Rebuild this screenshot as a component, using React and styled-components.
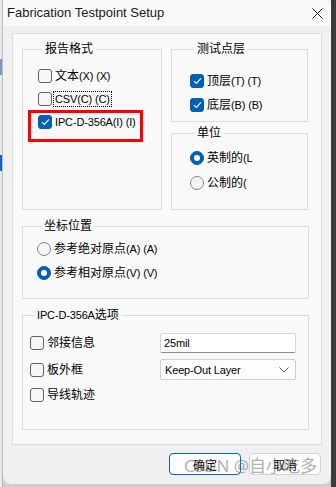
import React from "react";
import styled, { createGlobalStyle } from "styled-components";

const GlobalStyle = createGlobalStyle`
  html, body {
    margin: 0;
    padding: 0;
    background: #3b3b3b;
  }
  * {
    box-sizing: border-box;
  }
`;

const FONT = `"Liberation Sans", "Noto Sans CJK SC", sans-serif`;

const Desktop = styled.div`
  display: flex;
  width: 336px;
  height: 487px;
  overflow: hidden;
  background: #3b3b3b;
`;

const LeftStrip = styled.div`
  display: flex;
  flex-direction: column;
  width: 3px;
  height: 100%;
  background: #e9e9e9;
  border-right: 1px solid #bdbdbd;
`;

const StripBlock = styled.div`
  height: ${(p) => p.h}px;
  margin-top: ${(p) => p.top}px;
  background: ${(p) => p.color};
`;

const WindowCol = styled.div`
  display: flex;
  flex-direction: column;
  width: 328px;
  height: 100%;
  background: #cfcfcf;
`;

const Window = styled.div`
  position: relative;
  display: flex;
  flex-direction: column;
  height: 484px;
  background: #f0f0f0;
  border-radius: 0 0 8px 8px;
  font-family: ${FONT};
  font-size: 12px;
  color: #000;
`;

const TitleBar = styled.div`
  display: flex;
  align-items: center;
  justify-content: space-between;
  height: 26px;
  padding: 0 8px 0 4px;
  background: #f9f9f9;
  border-radius: 0 8px 0 0;
`;

const Title = styled.span`
  font-size: 13px;
  color: #1a1a1a;
  margin-top: -1px;
`;

const Body = styled.div`
  display: flex;
  flex-direction: column;
  padding: 7px 9px 0 9px;
`;

const Panel = styled.div`
  display: flex;
  flex-direction: column;
  gap: 9px;
  height: 412px;
  padding: 8px 12px 0 9px;
  background: #f9f9f9;
  border: 1px solid #dedede;
`;

const TopRow = styled.div`
  display: grid;
  grid-template-columns: 140px 137px;
  gap: 9px;
`;

const Column = styled.div`
  display: flex;
  flex-direction: column;
  gap: 4px;
`;

const Group = styled.fieldset`
  display: flex;
  flex-direction: column;
  gap: ${(p) => p.gap || 3}px;
  height: ${(p) => p.h}px;
  margin: 0;
  padding: ${(p) => p.pt || 8}px 0 0 ${(p) => p.pl || 15}px;
  border: 1px solid #dcdcdc;
  min-width: 0;
`;

const Legend = styled.legend`
  margin-left: 4px;
  padding: 0 3px;
  font-size: 12px;
  line-height: 14px;
  color: #000;
`;

/* Latin runs are set a size smaller, as the narrow UI font in the shot */
const Latin = styled.span`
  font-size: 11px;
  letter-spacing: -0.15px;
`;

const Row = styled.div`
  display: flex;
  align-items: center;
  height: 20px;
`;

const OptionRow = styled.div`
  display: grid;
  grid-template-columns: 130px 136px;
  align-items: center;
  height: 20px;
`;

const Item = styled.label`
  position: relative;
  display: flex;
  align-items: center;
  gap: 2px;
  height: 20px;
  white-space: nowrap;
`;

const Box = styled.span`
  display: flex;
  align-items: center;
  justify-content: center;
  width: 14px;
  height: 14px;
  border-radius: 3px;
  border: 1px solid ${(p) => (p.checked ? "#005fb8" : "#616161")};
  background: ${(p) => (p.checked ? "#005fb8" : "#f7f7f7")};
`;

const Radio = styled.span`
  display: flex;
  align-items: center;
  justify-content: center;
  width: 14px;
  height: 14px;
  border-radius: 50%;
  border: 1px solid ${(p) => (p.checked ? "#005fb8" : "#858585")};
  background: ${(p) => (p.checked ? "#005fb8" : "#f5f5f5")};

  &::after {
    content: "";
    display: ${(p) => (p.checked ? "block" : "none")};
    width: 6px;
    height: 6px;
    border-radius: 50%;
    background: #fff;
  }
`;

const Text = styled.span`
  padding: 0 1px;
  outline: ${(p) => (p.focused ? "1px dotted #000" : "none")};
  outline-offset: 0;
  line-height: 14px;
`;

const Highlight = styled.span`
  position: absolute;
  left: -10px;
  top: -2px;
  width: 115px;
  height: 32px;
  border: 3px solid #ff0000;
  pointer-events: none;
`;

const Input = styled.div`
  display: flex;
  align-items: center;
  height: 20px;
  padding-left: 3px;
  background: #fff;
  border: 1px solid #d6d6d6;
  border-bottom-color: #8c8c8c;
  border-radius: 2px;
`;

const Select = styled.div`
  display: flex;
  align-items: center;
  justify-content: space-between;
  height: 21px;
  padding: 0 6px 0 4px;
  background: #fdfdfd;
  border: 1px solid #d0d0d0;
  border-radius: 2px;
`;

const Footer = styled.div`
  display: flex;
  justify-content: flex-end;
  gap: 8px;
  padding: 8px 1px 0 0;
`;

const Button = styled.button`
  width: 72px;
  height: 22px;
  padding: 0;
  font-family: ${FONT};
  font-size: 12px;
  color: #000;
  background: #fdfdfd;
  border: 1px solid ${(p) => (p.primary ? "#0067c0" : "#d2d2d2")};
  border-radius: 4px;
`;

const Watermark = styled.div`
  position: absolute;
  left: 181px;
  top: 452px;
  font-family: "Noto Sans", "Noto Sans CJK SC", sans-serif;
  font-size: 17px;
  color: rgba(110, 110, 110, 0.55);
  pointer-events: none;
  white-space: nowrap;
`;

const Check = () => (
  <svg width="9" height="8" viewBox="0 0 9 8">
    <path d="M1 4.2 L3.4 6.4 L8 1.4" fill="none" stroke="#fff" strokeWidth="1.1" />
  </svg>
);

const CheckItem = ({ checked, children, focused }) => (
  <Item>
    <Box checked={checked}>{checked && <Check />}</Box>
    <Text focused={focused}>{children}</Text>
  </Item>
);

const RadioItem = ({ checked, children }) => (
  <Item>
    <Radio checked={checked} />
    <Text>{children}</Text>
  </Item>
);

const App = () => {
  return (
    <>
      <GlobalStyle />
      <Desktop>
        <LeftStrip>
          <StripBlock top={59} h={16} color="#7a98c2" />
          <StripBlock top={80} h={16} color="#0b63c3" />
        </LeftStrip>
        <WindowCol>
          <Window>
            <TitleBar>
              <Title>Fabrication Testpoint Setup</Title>
              <svg width="11" height="11" viewBox="0 0 11 11">
                <path d="M0.5 0.5 L10.5 10.5 M10.5 0.5 L0.5 10.5" stroke="#1a1a1a" strokeWidth="1" />
              </svg>
            </TitleBar>
            <Body>
              <Panel>
                <TopRow>
                  <Group h={168} pt={10} pl={15} gap={3}>
                    <Legend>报告格式</Legend>
                    <CheckItem>
                      文本<Latin>(X) (X)</Latin>
                    </CheckItem>
                    <CheckItem focused>
                      <Latin>CSV(C) (C)</Latin>
                    </CheckItem>
                    <Item>
                      <Box checked>
                        <Check />
                      </Box>
                      <Text>
                        <Latin>IPC-D-356A(I) (I)</Latin>
                      </Text>
                      <Highlight />
                    </Item>
                  </Group>
                  <Column>
                    <Group h={80} pt={15} pl={18} gap={4}>
                      <Legend>测试点层</Legend>
                      <CheckItem checked>
                        顶层<Latin>(T) (T)</Latin>
                      </CheckItem>
                      <CheckItem checked>
                        底层<Latin>(B) (B)</Latin>
                      </CheckItem>
                    </Group>
                    <Group h={84} pt={8} pl={18} gap={5}>
                      <Legend>单位</Legend>
                      <RadioItem checked>
                        英制的<Latin>(L</Latin>
                      </RadioItem>
                      <RadioItem>
                        公制的<Latin>(</Latin>
                      </RadioItem>
                    </Group>
                  </Column>
                </TopRow>
                <Group h={80} pt={6} pl={14} gap={4}>
                  <Legend>坐标位置</Legend>
                  <RadioItem>
                    参考绝对原点<Latin>(A) (A)</Latin>
                  </RadioItem>
                  <RadioItem checked>
                    参考相对原点<Latin>(V) (V)</Latin>
                  </RadioItem>
                </Group>
                <Group h={122} pt={11} pl={7} gap={6}>
                  <Legend>
                    <Latin>IPC-D-356A</Latin>选项
                  </Legend>
                  <OptionRow>
                    <CheckItem>邻接信息</CheckItem>
                    <Input>
                      <Latin>25mil</Latin>
                    </Input>
                  </OptionRow>
                  <OptionRow>
                    <CheckItem>板外框</CheckItem>
                    <Select>
                      <Latin>Keep-Out Layer</Latin>
                      <svg width="10" height="6" viewBox="0 0 10 6">
                        <path d="M0.5 0.5 L5 5 L9.5 0.5" fill="none" stroke="#555" strokeWidth="1" />
                      </svg>
                    </Select>
                  </OptionRow>
                  <Row>
                    <CheckItem>导线轨迹</CheckItem>
                  </Row>
                </Group>
              </Panel>
              <Footer>
                <Button primary>确定</Button>
                <Button>取消</Button>
              </Footer>
            </Body>
            <Watermark>CSDN @自小吃多</Watermark>
          </Window>
        </WindowCol>
      </Desktop>
    </>
  );
};

export default App;
